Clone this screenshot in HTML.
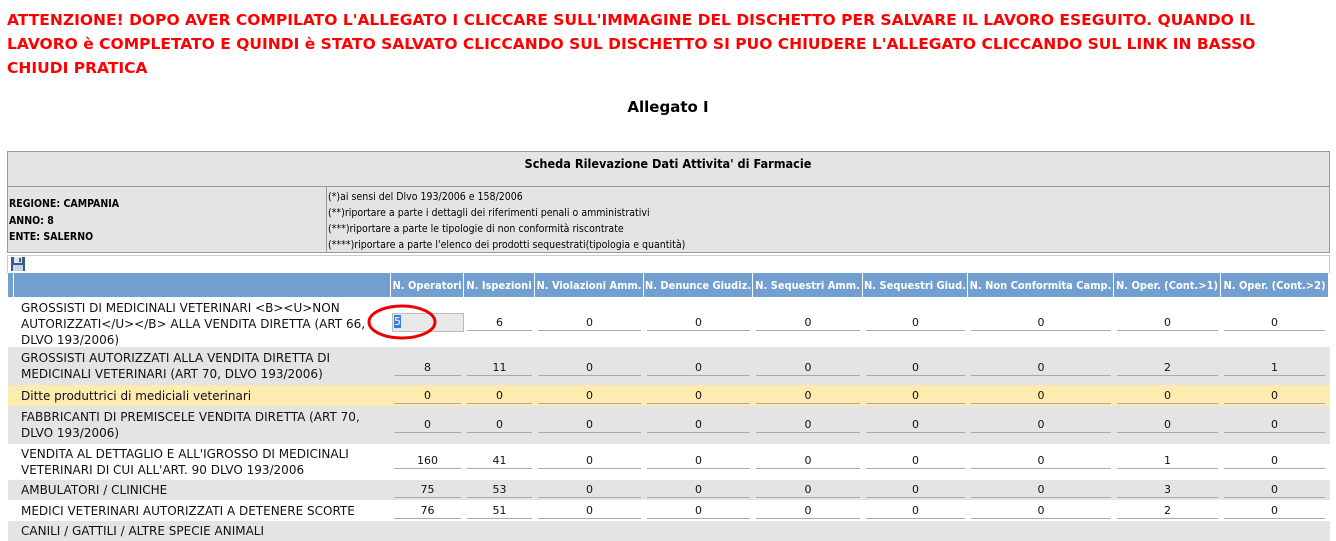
<!DOCTYPE html>
<html><head><meta charset="utf-8"><style>
body{margin:0;width:1336px;height:533px;overflow:hidden;background:#fff;font-family:"DejaVu Sans","Liberation Sans",sans-serif;position:relative}
.a{position:absolute;white-space:nowrap}
.warn{color:#f00;font-weight:bold;font-size:15.5px;left:7px}
.cell{position:absolute}
.h{position:absolute;top:273px;height:24px;background:#729fcf;color:#fff;font-family:"DejaVu Sans Condensed","DejaVu Sans",sans-serif;font-weight:bold;font-size:11px;line-height:26px;text-align:center;border-right:1px solid #fff;box-sizing:border-box;white-space:nowrap;overflow:hidden}
.row{position:absolute;left:8px;width:1322px}
.lbl{position:absolute;left:13px;font-size:12px;line-height:16px;color:#111;white-space:nowrap}
.v{position:absolute;height:15px;border-bottom:1px solid #aaa;font-size:11px;text-align:center;line-height:15px;color:#111}
.small{font-family:"DejaVu Sans Condensed","DejaVu Sans",sans-serif;font-size:10.5px;line-height:15px}
</style></head><body>
<div class="a warn" style="top:11px">ATTENZIONE! DOPO AVER COMPILATO L'ALLEGATO I CLICCARE SULL'IMMAGINE DEL DISCHETTO PER SALVARE IL LAVORO ESEGUITO. QUANDO IL</div>
<div class="a warn" style="top:35px">LAVORO è COMPLETATO E QUINDI è STATO SALVATO CLICCANDO SUL DISCHETTO SI PUO CHIUDERE L'ALLEGATO CLICCANDO SUL LINK IN BASSO</div>
<div class="a warn" style="top:59px">CHIUDI PRATICA</div>
<div class="a" style="top:98px;left:0;width:1336px;text-align:center;font-weight:bold;font-size:15px">Allegato I</div>

<div class="cell" style="left:7px;top:151px;width:1321px;height:100px;border:1px solid #999;background:#e4e4e4"></div>
<div class="cell" style="left:8px;top:186px;width:1321px;border-top:1px solid #999"></div>
<div class="cell" style="left:326px;top:187px;height:65px;border-left:1px solid #999"></div>
<div class="a small" style="left:0;width:1336px;top:156px;text-align:center;font-weight:bold;font-size:12.6px">Scheda Rilevazione Dati Attivita' di Farmacie</div>
<div class="a small" style="left:9px;top:196px;font-weight:bold;line-height:16.5px">REGIONE: CAMPANIA<br>ANNO: 8<br>ENTE: SALERNO</div>
<div class="a small" style="left:328px;top:189px;line-height:16px">(*)ai sensi del Dlvo 193/2006 e 158/2006<br>(**)riportare a parte i dettagli dei riferimenti penali o amministrativi<br>(***)riportare a parte le tipologie di non conformità riscontrate<br>(****)riportare a parte l'elenco dei prodotti sequestrati(tipologia e quantità)</div>
<div class="cell" style="left:7px;top:255px;width:1321px;height:17px;border:1px solid #ccc;border-bottom:none"></div>
<svg class="cell" style="left:10px;top:256px" width="16" height="16" viewBox="0 0 16 16"><rect x="1" y="1" width="14" height="14" fill="#3a5a8a"/><rect x="4" y="1" width="8" height="6" fill="#dfe8f2"/><rect x="9" y="2" width="2" height="4" fill="#3a5a8a"/><rect x="3" y="9" width="10" height="6" fill="#c8d4e4"/></svg>

<div class="h" style="left:8px;width:6px"></div>
<div class="h" style="left:14px;width:377px"></div>
<div class="h" style="left:391px;width:73px">N. Operatori</div>
<div class="h" style="left:464px;width:71px">N. Ispezioni</div>
<div class="h" style="left:535px;width:109px">N. Violazioni Amm.</div>
<div class="h" style="left:644px;width:109px">N. Denunce Giudiz.</div>
<div class="h" style="left:753px;width:110px">N. Sequestri Amm.</div>
<div class="h" style="left:863px;width:105px">N. Sequestri Giud.</div>
<div class="h" style="left:968px;width:146px">N. Non Conformita Camp.</div>
<div class="h" style="left:1114px;width:107px">N. Oper. (Cont.&gt;1)</div>
<div class="h" style="left:1221px;width:108px">N. Oper. (Cont.&gt;2)</div>

<div class="row" style="top:297px;height:50px;background:#fff"><div class="lbl" style="top:3px">GROSSISTI DI MEDICINALI VETERINARI &lt;B&gt;&lt;U&gt;NON<br>AUTORIZZATI&lt;/U&gt;&lt;/B&gt; ALLA VENDITA DIRETTA (ART 66,<br>DLVO 193/2006)</div></div>
<div class="row" style="top:347px;height:38px;background:#e4e4e4"><div class="lbl" style="top:3px">GROSSISTI AUTORIZZATI ALLA VENDITA DIRETTA DI<br>MEDICINALI VETERINARI (ART 70, DLVO 193/2006)</div></div>
<div class="row" style="top:385px;height:21px;background:#fdebb0"><div class="lbl" style="top:3px">Ditte produttrici di mediciali veterinari</div></div>
<div class="row" style="top:406px;height:38px;background:#e4e4e4"><div class="lbl" style="top:3px">FABBRICANTI DI PREMISCELE VENDITA DIRETTA (ART 70,<br>DLVO 193/2006)</div></div>
<div class="row" style="top:444px;height:36px;background:#fff"><div class="lbl" style="top:2px">VENDITA AL DETTAGLIO E ALL'IGROSSO DI MEDICINALI<br>VETERINARI DI CUI ALL'ART. 90 DLVO 193/2006</div></div>
<div class="row" style="top:480px;height:20px;background:#e4e4e4"><div class="lbl" style="top:2px">AMBULATORI / CLINICHE</div></div>
<div class="row" style="top:500px;height:21px;background:#fff"><div class="lbl" style="top:3px">MEDICI VETERINARI AUTORIZZATI A DETENERE SCORTE</div></div>
<div class="row" style="top:521px;height:20px;background:#e4e4e4"><div class="lbl" style="top:2px">CANILI / GATTILI / ALTRE SPECIE ANIMALI</div></div>

<div id="vals"></div>
<script>
var cols=[[394,67],[467,65],[538,103],[647,103],[756,104],[866,99],[971,140],[1117,101],[1224,101]];
var rows=[[315,[5,6,0,0,0,0,0,0,0]],[360,[8,11,0,0,0,0,0,2,1]],[388,[0,0,0,0,0,0,0,0,0]],[417,[0,0,0,0,0,0,0,0,0]],[453,[160,41,0,0,0,0,0,1,0]],[482,[75,53,0,0,0,0,0,3,0]],[503,[76,51,0,0,0,0,0,2,0]]];
var h='';
rows.forEach(function(r){cols.forEach(function(c,i){
 if(r[0]==315&&i==0){h+='<div class="v" style="left:392px;top:313px;width:69px;height:17px;background:#e8e8e8;border:1px solid #bbb;text-align:left;padding-left:1px"><span style="background:#3a7bd5;color:#fff">5</span></div>';return;}
 h+='<div class="v" style="left:'+c[0]+'px;top:'+r[0]+'px;width:'+c[1]+'px">'+r[1][i]+'</div>';});});
document.getElementById('vals').innerHTML=h;
</script>
<svg class="cell" style="left:366px;top:302px" width="74" height="40"><ellipse cx="36" cy="20" rx="33" ry="16" fill="none" stroke="#e00" stroke-width="3"/></svg>
</body></html>
